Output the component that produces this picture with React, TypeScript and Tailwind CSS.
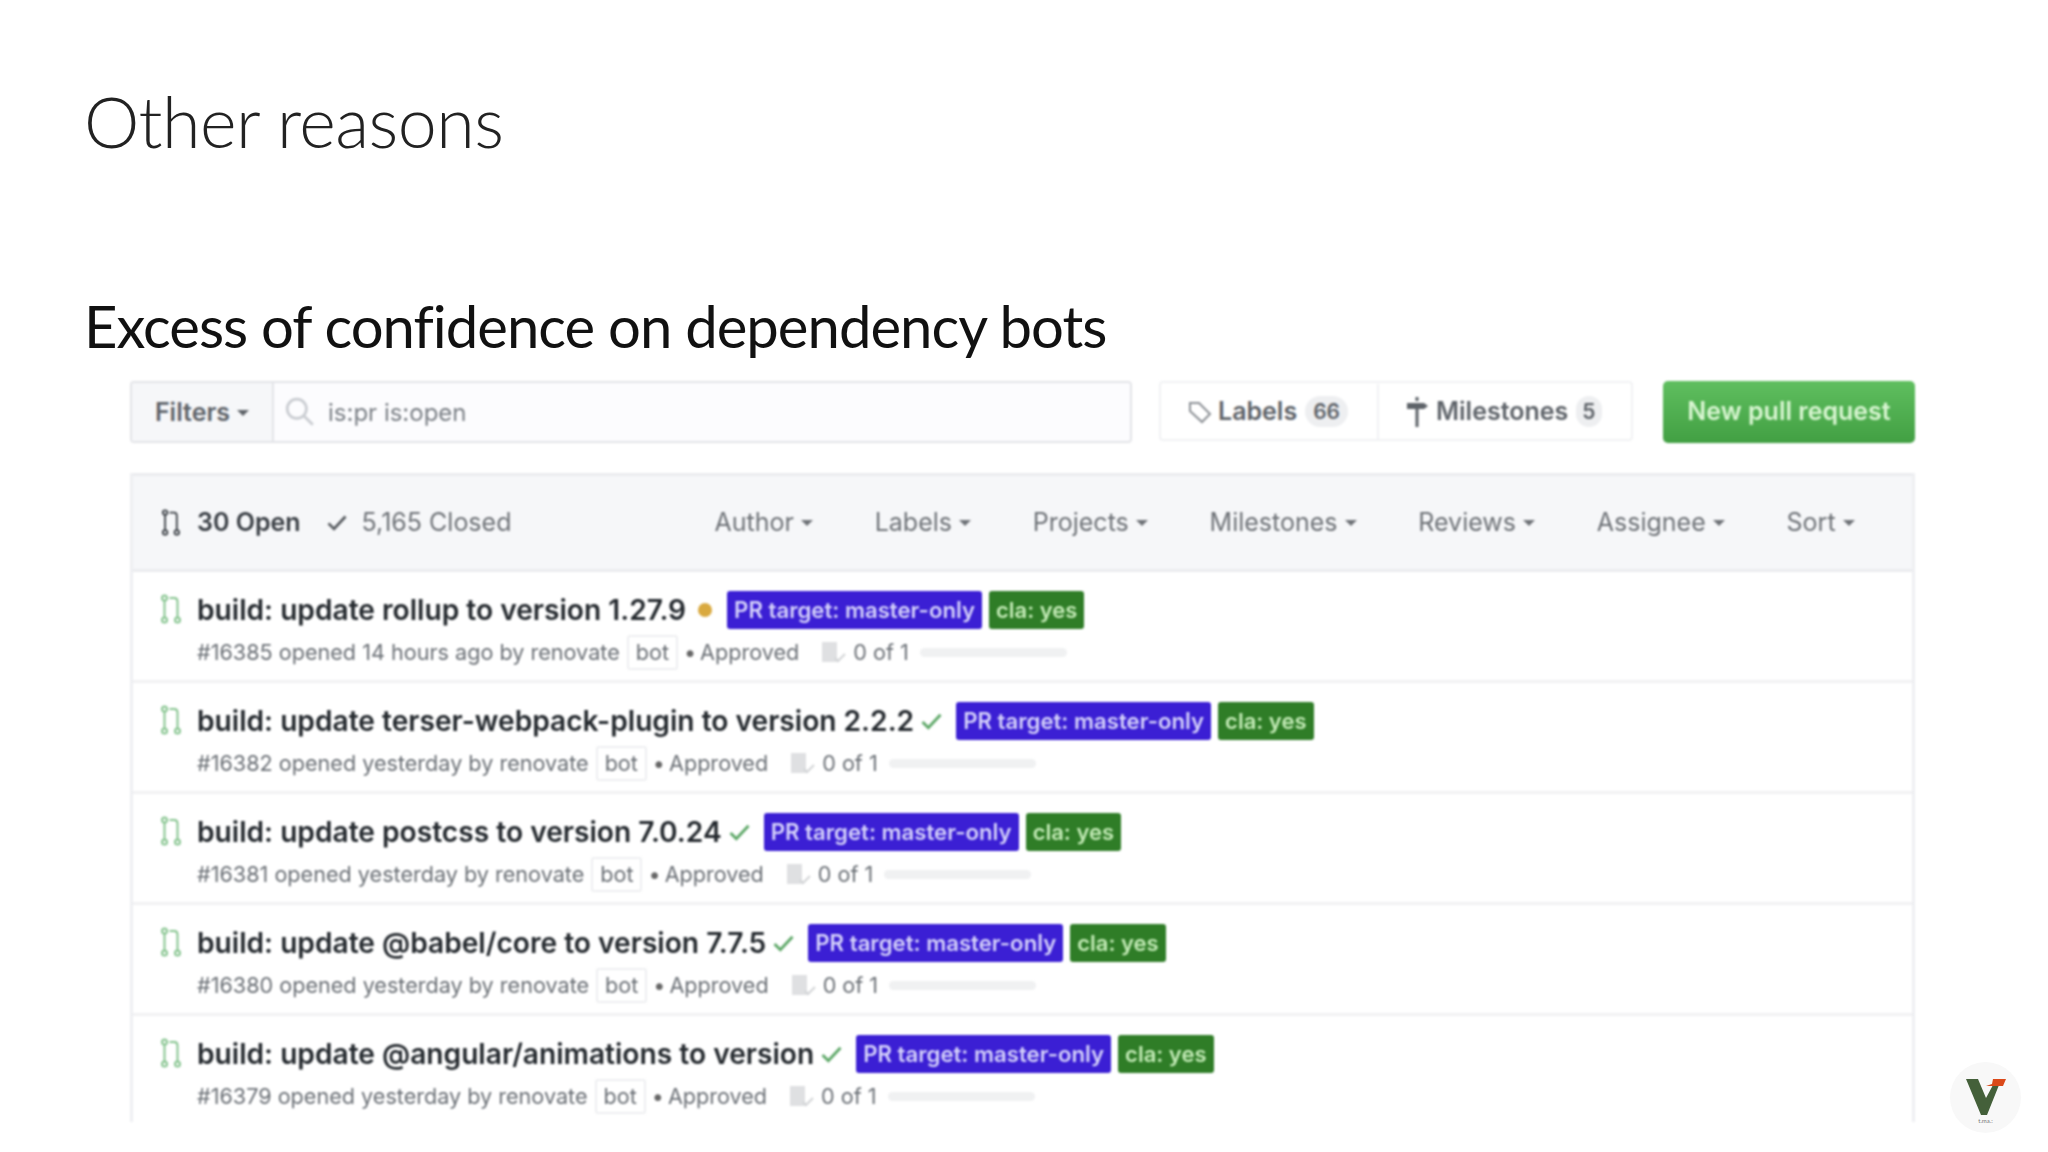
import React from "react";

const rows = [
    { title: "build: update rollup to version 1.27.9", pending: true, num: "#16385", when: "14 hours ago" },
    { title: "build: update terser-webpack-plugin to version 2.2.2", pending: false, num: "#16382", when: "yesterday" },
    { title: "build: update postcss to version 7.0.24", pending: false, num: "#16381", when: "yesterday" },
    { title: "build: update @babel/core to version 7.7.5", pending: false, num: "#16380", when: "yesterday" },
    { title: "build: update @angular/animations to version", pending: false, num: "#16379", when: "yesterday" },
];

const filters = ["Author", "Labels", "Projects", "Milestones", "Reviews", "Assignee", "Sort"];

function Caret() {
    return <span className="ml-[7px] inline-block h-0 w-0 border-x-[6px] border-t-[6px] border-x-transparent border-t-current" />;
}

function PullIcon({ className }: { className?: string }) {
    return (
        <svg viewBox="0 0 20 30" fill="none" stroke="currentColor" strokeWidth="2" className={className}>
            <circle cx="4" cy="4" r="2.5" />
            <path d="M4 6.5v17" />
            <circle cx="4" cy="26" r="2.5" />
            <path d="M9 4h5c2 0 3 1.5 3 3.5V23.5" />
            <circle cx="17" cy="26" r="2.5" />
        </svg>
    );
}

function Check({ className }: { className?: string }) {
    return (
        <svg viewBox="0 0 24 20" fill="none" stroke="currentColor" strokeWidth="3.2" className={className}>
            <path d="M2 11l6.5 6.5L22 3" />
        </svg>
    );
}

function Row({ row }: { row: (typeof rows)[number] }) {
    return (
        <div className="flex h-[111px] shrink-0 border-b-[3px] border-[#f1f1f3] pl-[27px]">
            <PullIcon className="mt-[22px] h-[30px] w-[21px] text-[#86c48f]" />
            <div className="ml-[16px] flex flex-col pt-[19px]">
                <div className="flex h-[38px] items-center">
                    <span className="text-[28.15px] font-semibold text-[#24292e]">{row.title}</span>
                    {row.pending ? (
                        <span className="ml-[12px] h-[14px] w-[14px] rounded-full bg-[#d9a93f]" />
                    ) : (
                        <Check className="ml-[6px] h-[18px] w-[23px] text-[#5ea868]" />
                    )}
                    <span className={`${row.pending ? "ml-[15px]" : "ml-[13px]"} flex h-[38px] items-center rounded-[3px] bg-[#3b1fd4] px-[7px] text-[22.2px] font-semibold text-[#d6d3fb]`}>
                        PR target: master-only
                    </span>
                    <span className="ml-[7px] flex h-[38px] items-center rounded-[3px] bg-[#2f7d27] px-[7px] text-[22px] font-semibold text-[#c5ecb8]">
                        cla: yes
                    </span>
                </div>
                <div className="mt-[5px] flex h-[37px] items-center text-[21.6px] text-[#6a6f75]">
                    <span>
                        {row.num} opened {row.when} by renovate
                    </span>
                    <span className="ml-[7px] flex h-[35px] items-center rounded-[3px] border-2 border-[#eeeff1] px-[7px]">bot</span>
                    <span className="ml-[6px] text-[#666]">•</span>
                    <span className="ml-[4px]">Approved</span>
                    <svg viewBox="0 0 26 22" className="ml-[22px] h-[22px] w-[26px]">
                        <rect x="1" y="0" width="15" height="20" fill="#dfe0e2" />
                        <path d="M14 16l3 3 7-7" fill="none" stroke="#d2d4d6" strokeWidth="2" />
                    </svg>
                    <span className="ml-[6px]">0 of 1</span>
                    <span className="ml-[11px] h-[9px] w-[147px] rounded-full bg-[#f0f1f2]" />
                </div>
            </div>
        </div>
    );
}

export default function App() {
    return (
        <div className="relative flex h-[1152px] w-[2048px] flex-col overflow-hidden bg-white font-['Lato',sans-serif]">
            <h1 className="mt-[79px] ml-[84px] h-[84px] text-[70px] leading-[84px] font-light tracking-[-0.55px] text-[#222]">Other reasons</h1>
            <h2 className="mt-[130px] ml-[84px] h-[66px] text-[58px] leading-[66px] font-normal tracking-[-0.98px] text-[#111]">Excess of confidence on dependency bots</h2>

            {/* screenshot */}
            <div className="mt-[22px] ml-[130px] flex h-[741px] w-[1785px] flex-col overflow-hidden font-['Inter',sans-serif] blur-[0.8px]">
                <div className="flex h-[62px] shrink-0 items-stretch text-[25px]">
                    <div className="flex w-[1002px] overflow-hidden rounded-[4px] border-2 border-[#e3e4e8]">
                        <div className="flex w-[142px] items-center justify-center border-r-2 border-[#e3e4e8] bg-[#f6f7f9] pt-[1px] font-semibold text-[#5e6369]">
                            Filters
                            <Caret />
                        </div>
                        <div className="flex flex-1 items-center bg-[#fcfcfe] pl-[10px] text-[24px] text-[#7a7f85]">
                            <svg viewBox="0 0 30 30" fill="none" stroke="#c9ccd1" strokeWidth="2.5" className="h-[32px] w-[32px]">
                                <circle cx="12" cy="12" r="9" />
                                <path d="M19 19l8 8" />
                            </svg>
                            <span className="ml-[12px] pt-[1px]">is:pr is:open</span>
                        </div>
                    </div>
                    <div className="ml-[27px] flex h-[60px] w-[474px] rounded-[4px] border-2 border-[#f1f2f4] bg-white pt-[1px] text-[#5e6369]">
                        <div className="flex w-[218px] items-center border-r-2 border-[#f1f2f4] pl-[27px] font-semibold">
                            <svg viewBox="0 0 24 24" fill="none" stroke="#8d9196" strokeWidth="2" className="h-[24px] w-[24px]">
                                <path d="M2 3h9l11 11-8 8L2 11z" />
                            </svg>
                            <span className="ml-[6px]">Labels</span>
                            <span className="ml-[8px] rounded-full bg-[#eeeff1] px-[8px] text-[21px]">66</span>
                        </div>
                        <div className="flex flex-1 items-center pl-[26px] font-semibold">
                            <svg viewBox="0 0 24 30" fill="#5e6369" className="h-[30px] w-[24px]">
                                <rect x="10.5" y="0" width="3" height="4" />
                                <path d="M2 6h17l4 3-4 3H2z" />
                                <rect x="10.5" y="12" width="3" height="18" />
                            </svg>
                            <span className="ml-[7px]">Milestones</span>
                            <span className="ml-[8px] rounded-full bg-[#eeeff1] px-[6px] text-[21px]">5</span>
                        </div>
                    </div>
                    <div className="ml-[30px] flex h-[62px] flex-1 items-center justify-center rounded-[5px] bg-gradient-to-b from-[#5fbf5f] to-[#42a043] font-semibold text-[#d9f6d2]">
                        New pull request
                    </div>
                </div>

                <div className="mt-[30px] flex flex-1 flex-col border-x-[3px] border-[#eeeff2]">
                    <div className="flex h-[99px] shrink-0 items-center border-y-[3px] border-[#ebecef] bg-[#f6f7f9] pl-[27px] text-[25px] text-[#6e7277]">
                        <PullIcon className="h-[27px] w-[21px] text-[#3a3f45]" />
                        <span className="ml-[16px] font-semibold text-[#3a3f45]">30 Open</span>
                        <Check className="ml-[25px] h-[17px] w-[22px] text-[#54585d]" />
                        <span className="ml-[14px]">5,165 Closed</span>
                        <div className="ml-[203px] flex gap-[61.8px]">
                            {filters.map((f) => (
                                <span key={f} className="flex items-center">
                                    {f}
                                    <Caret />
                                </span>
                            ))}
                        </div>
                    </div>
                    {rows.map((r) => (
                        <Row key={r.num} row={r} />
                    ))}
                </div>
            </div>

            {/* logo bubble */}
            <div className="absolute top-[1062px] left-[1950px] flex h-[71px] w-[71px] flex-col items-center rounded-full bg-[#f8f8f8] pt-[17px]">
                <svg viewBox="0 0 40 36" className="h-[36px] w-[40px]">
                    <path d="M0 0h12l8 19 7-13h6L21 36h-6z" fill="#44603a" />
                    <path d="M27 0h13l-3 7H20l6-2z" fill="#db4a1a" />
                </svg>
                <span className="mt-[2px] text-[6px] leading-[7px] text-[#777]">t.ma.:</span>
            </div>
        </div>
    );
}
